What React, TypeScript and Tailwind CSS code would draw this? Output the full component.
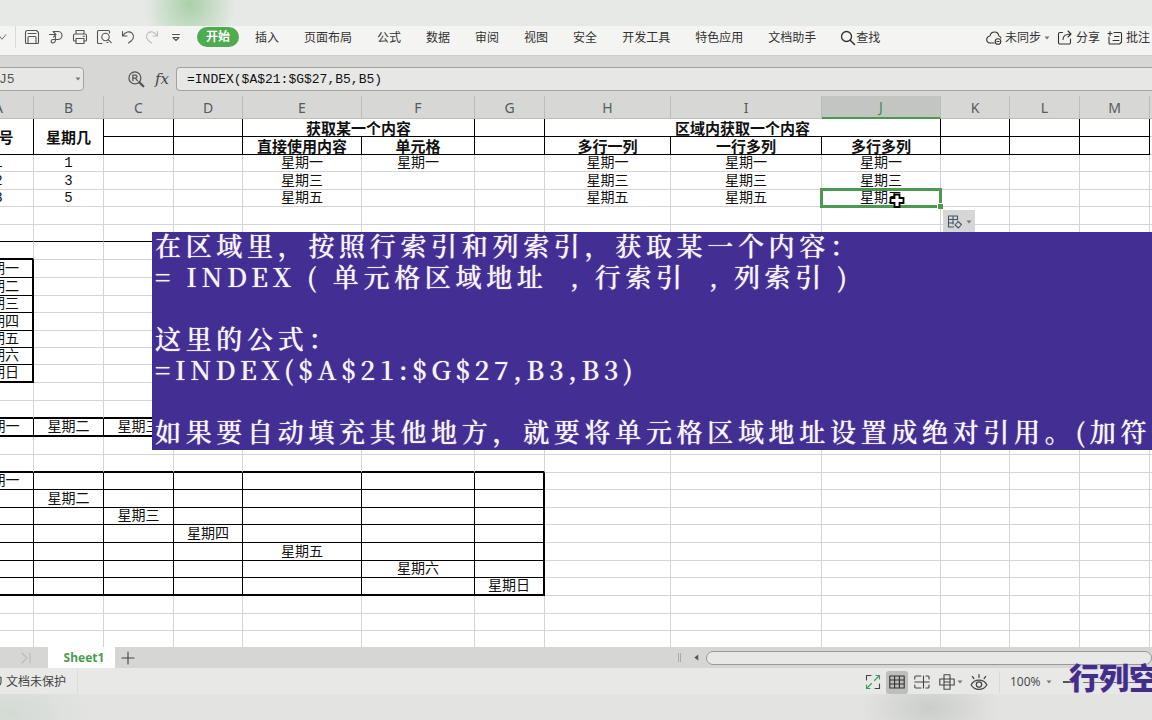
import React from "react";
import clsx from "clsx";

const UI_FONT = "font-['Open_Sans','Noto_Sans_CJK_SC',sans-serif]";

const COLUMNS = [
  { name: "A", width: "w-[70px]" },
  { name: "B", width: "w-[70px]" },
  { name: "C", width: "w-[70px]" },
  { name: "D", width: "w-[69px]" },
  { name: "E", width: "w-[119px]" },
  { name: "F", width: "w-[113px]" },
  { name: "G", width: "w-[70px]" },
  { name: "H", width: "w-[126px]" },
  { name: "I", width: "w-[151px]" },
  { name: "J", width: "w-[119px]" },
  { name: "K", width: "w-[69px]" },
  { name: "L", width: "w-[70px]" },
  { name: "M", width: "w-[70px]" },
  { name: "N", width: "w-[70px]" },
];

// Rows are a little under 18px, so some of them lose a pixel
const ROW_COUNT = 31;
const SHORT_ROWS = [3, 5, 7, 11, 13, 14, 21, 23, 26, 29];

const DAYS = ["星期一", "星期二", "星期三", "星期四", "星期五", "星期六", "星期日"];

const CELLS: Record<string, string> = {
  E2: "直接使用内容",
  F2: "单元格",
  H2: "多行一列",
  I2: "一行多列",
  J2: "多行多列",
  A3: "1",
  B3: "1",
  E3: "星期一",
  F3: "星期一",
  H3: "星期一",
  I3: "星期一",
  J3: "星期一",
  A4: "2",
  B4: "3",
  E4: "星期三",
  H4: "星期三",
  I4: "星期三",
  J4: "星期三",
  A5: "3",
  B5: "5",
  E5: "星期五",
  H5: "星期五",
  I5: "星期五",
  J5: "星期五",
  A18: "星期一",
  B18: "星期二",
  C18: "星期三",
};

DAYS.forEach((day, i) => {
  CELLS[`A${9 + i}`] = day; // one column
  CELLS[`${COLUMNS[i].name}${21 + i}`] = day; // diagonal
});

// Merged areas: first cell -> span
const MERGED: Record<string, { rowSpan?: number; colSpan?: number; text: string }> = {
  A1: { rowSpan: 2, text: "序号" },
  B1: { rowSpan: 2, text: "星期几" },
  E1: { colSpan: 2, text: "获取某一个内容" },
  H1: { colSpan: 3, text: "区域内获取一个内容" },
};
const COVERED = ["A2", "B2", "F1", "I1", "J1"];

function rightBorder(row: number, col: number) {
  if (row <= 2 && col <= 12) return "border-r border-r-black";
  if (row >= 9 && row <= 15 && col === 0) return "border-r-2 border-r-black";
  if (row === 18 && col <= 6) return "border-r border-r-black";
  if (row >= 21 && row <= 27 && col === 6) return "border-r-2 border-r-black";
  if (row >= 21 && row <= 27 && col < 6) return "border-r border-r-black";
  return "border-r border-r-[#d4d4d4]";
}

function bottomBorder(row: number, col: number) {
  if (row <= 2 && col <= 12) return "border-b border-b-black";
  if (row === 7 && col <= 6) return "border-b border-b-black";
  if ((row === 8 || row === 15) && col === 0) return "border-b-2 border-b-black";
  if (row > 8 && row < 15 && col === 0) return "border-b border-b-black";
  if ((row === 17 || row === 18) && col <= 6) return "border-b-2 border-b-black";
  if ((row === 20 || row === 27) && col <= 6) return "border-b-2 border-b-black";
  if (row > 20 && row < 27 && col <= 6) return "border-b border-b-black";
  return "border-b border-b-[#d4d4d4]";
}

function Icon({
  children,
  className = "size-4",
}: {
  children: React.ReactNode;
  className?: string;
}) {
  return (
    <svg
      viewBox="0 0 16 16"
      fill="none"
      stroke="currentColor"
      strokeWidth="1.1"
      strokeLinecap="round"
      strokeLinejoin="round"
      className={clsx("shrink-0", className)}
      aria-hidden="true"
    >
      {children}
    </svg>
  );
}

function Caret() {
  return (
    <svg viewBox="0 0 6 4" className="h-[4px] w-[6px] shrink-0" aria-hidden="true">
      <path d="M0.5 0.5h5L3 3.5z" fill="#777" />
    </svg>
  );
}

const QUICK_ACTIONS = [
  {
    label: "保存",
    icon: (
      <Icon>
        <path d="M1.5 13.5v-10a2 2 0 0 1 2-2h9l2 2v10a1 1 0 0 1-1 1h-11a1 1 0 0 1-1-1z" />
        <path d="M4 14.5V8.5a1 1 0 0 1 1-1h6a1 1 0 0 1 1 1v6M4 4.5h8" />
      </Icon>
    ),
  },
  {
    label: "输出",
    icon: (
      <Icon>
        <path d="M5 2.500h5a4 4 0 0 1 0 8H7.500M1.500 5.500h6M5.500 3l2.500 2.500L5.500 8M7.500 7.500v3.500a3 3 0 0 1-3 3 1.800 1.800 0 0 1 0-3.500h3" />
      </Icon>
    ),
  },
  {
    label: "打印",
    icon: (
      <Icon>
        <path d="M4 5V1.5h8V5M4 12H2.5a1 1 0 0 1-1-1V6.500a1.500 1.500 0 0 1 1.500-1.500h10a1.500 1.500 0 0 1 1.500 1.500V11a1 1 0 0 1-1 1H12" />
        <path d="M4 9.500h8v5H4zM11 7.200h1.500" />
      </Icon>
    ),
  },
  {
    label: "打印预览",
    icon: (
      <Icon>
        <path d="M6 14.500H2.500a1 1 0 0 1-1-1v-11a1 1 0 0 1 1-1h10a1 1 0 0 1 1 1V4" />
        <circle cx="9.500" cy="8" r="3.700" />
        <path d="M12.200 10.700l3 3M11 13.500h1" />
      </Icon>
    ),
  },
  {
    label: "撤销",
    icon: (
      <Icon>
        <path d="M2.500 2.500v4.500h4.500M2.800 6.800C5.500 2.500 9.500 2 12 4.200c2.800 2.600 2 6.500-3.500 9.800" />
      </Icon>
    ),
  },
  {
    label: "恢复",
    muted: true,
    icon: (
      <Icon>
        <path d="M13.500 2.500v4.500H9M13.200 6.800C10.500 2.500 6.500 2 4 4.200 1.200 6.800 2 10.700 7.500 14" />
      </Icon>
    ),
  },
  {
    label: "自定义",
    icon: (
      <Icon>
        <path d="M4.500 5.500h7M5 8.500h6L8 11.500z" />
      </Icon>
    ),
  },
];

const MENU = [
  "插入",
  "页面布局",
  "公式",
  "数据",
  "审阅",
  "视图",
  "安全",
  "开发工具",
  "特色应用",
  "文档助手",
];

function MenuBar() {
  return (
    <nav className="flex h-[30px] shrink-0 items-start overflow-hidden border-b border-[#cdcdcb] bg-[#f4f4f2] text-[12px] leading-[16px] whitespace-nowrap text-[#333]">
      <div className="flex h-[22px] items-center text-[#555]">
        <button aria-label="文件" className="flex w-[15px] shrink-0">
          <Icon className="-ml-1 size-3">
            <path d="M4 6l4 5 5-6" />
          </Icon>
        </button>
        <span className="h-[22px] w-px bg-[#d8d8d6]" />
        <div className="ml-2 flex gap-2">
          {QUICK_ACTIONS.map((action) => (
            <button
              key={action.label}
              aria-label={action.label}
              className={action.muted ? "text-[#bdbdbd]" : ""}
            >
              {action.icon}
            </button>
          ))}
        </div>
      </div>
      <button className="mt-px ml-[13px] h-[20px] shrink-0 rounded-full bg-[#4fab50] px-[9px] font-bold text-white">
        开始
      </button>
      <div className="ml-4 flex h-[24px] shrink-0 items-center gap-[25px]">
        {MENU.map((item) => (
          <button key={item}>{item}</button>
        ))}
        <button className="flex items-center text-[#333]">
          <Icon className="-ml-px size-4">
            <circle cx="6.500" cy="6.500" r="5" strokeWidth="1.300" />
            <path d="M10.200 10.200l4.300 4.300" strokeWidth="1.500" />
          </Icon>
          查找
        </button>
      </div>
      <div className="ml-auto flex h-[24px] shrink-0 items-center gap-[7px] pr-[2px]">
        <button className="flex items-center gap-[3px]">
          <Icon>
            <path d="M8 13H4.500A3.500 3.500 0 0 1 4 6C4.500 3.500 6.300 2 8.500 2s4 1.500 4.400 4c1 .3 1.800 1 2.100 2" />
            <circle cx="12" cy="11.500" r="2.800" />
            <path d="M11 11.500h2" />
          </Icon>
          未同步
          <Caret />
        </button>
        <button className="flex items-center gap-[3px]">
          <Icon>
            <path d="M5.500 2.500H3a1.500 1.500 0 0 0-1.500 1.500v8.500A1.500 1.500 0 0 0 3 14h9a1.500 1.500 0 0 0 1.500-1.500V9M6 9.500c0-3.500 2.500-5.500 7.500-5.500M11 1l3 3-3 3" />
          </Icon>
          分享
        </button>
        <button className="flex items-center gap-[3px]">
          <Icon>
            <path d="M7 2.500h6.500a1 1 0 0 1 1 1v8.500l-2 2H3a1 1 0 0 1-1-1V7M1 3.500h4M3 1.500v4M7.500 6.500H12M6 10.500h6" />
          </Icon>
          批注
        </button>
      </div>
    </nav>
  );
}

function FormulaBar() {
  return (
    <div className="flex h-[40px] shrink-0 items-center bg-[#d7d7d5] pt-[5px]">
      <div className="-ml-[6px] flex h-[24px] w-[90px] shrink-0 items-center rounded-[4px] border border-[#a3a3a1] bg-[#e7e7e6] pr-[2px]">
        <input
          aria-label="名称框"
          defaultValue="J5"
          className="w-0 flex-1 bg-transparent pt-[2px] pl-[4px] font-['Liberation_Mono',monospace] text-[13px] text-[#555] outline-none"
        />
        <Caret />
      </div>
      <button aria-label="查找公式" className="ml-[43px] text-[#555]">
        <Icon className="size-[18px]">
          <circle cx="7" cy="7" r="5.300" />
          <path d="M5.200 9.500v-5H7.500a1.300 1.300 0 0 1 0 2.700H5.200M7.500 7.200l1.700 2.300" />
          <path d="M11 11l3.500 3.500" strokeWidth="2" />
        </Icon>
      </button>
      <button
        aria-label="插入函数"
        className="ml-[8px] w-[18px] font-['DejaVu_Serif',serif] text-[15px] leading-[20px] text-[#444] italic"
      >
        fx
      </button>
      <input
        aria-label="编辑栏"
        defaultValue="=INDEX($A$21:$G$27,B5,B5)"
        className="ml-[5px] h-[24px] min-w-0 flex-1 rounded-l-[4px] border border-r-0 border-[#a3a3a1] bg-[#e7e7e6] pt-[2px] pl-[10px] font-['Liberation_Mono',monospace] text-[13px] text-[#111] outline-none"
      />
    </div>
  );
}

function Selection() {
  return (
    <>
      <span className="absolute -top-[2px] -right-[2px] -bottom-[2px] -left-[2px] border-[3px] border-[#4c9a52]" />
      <span className="absolute -right-[3px] -bottom-[3px] size-[6px] border-t border-l border-white bg-[#4c9a52]" />
      {/* cell pointer */}
      <svg
        viewBox="0 0 16 16"
        className="absolute top-[3px] left-[67px] size-[16px]"
        aria-hidden="true"
      >
        <path
          d="M5.500 1.500h5v3.500h4v5h-4v4h-5v-4h-4V5h4z"
          fill="#fff"
          stroke="#000"
          strokeWidth="1.800"
        />
      </svg>
      <button
        aria-label="填充选项"
        className="absolute top-[20px] left-[121px] flex h-[24px] w-[32px] items-center gap-[3px] bg-[#d6d6d6] pl-[4px] text-[#456]"
      >
        <Icon>
          <path d="M1.500 2h9v4M1.500 2v11h5M1.500 5.500h9M1.500 9h5M6 2v8" />
          <path d="M11 7.500l3.500 3-3 3.500-3.500-3z" />
        </Icon>
        <Caret />
      </button>
    </>
  );
}

function Sheet() {
  return (
    <table className="-ml-[36px] w-[1256px] table-fixed border-separate border-spacing-0 text-center">
      <colgroup>
        {COLUMNS.map((c) => (
          <col key={c.name} className={c.width} />
        ))}
      </colgroup>
      <thead>
        <tr>
          {COLUMNS.map((c) => (
            <th
              key={c.name}
              scope="col"
              className={clsx(
                "h-[23px] border-r border-r-[#bcbcba] p-0 pt-px font-['Noto_Sans',sans-serif] text-[14px] leading-[20px] font-normal",
                c.name === "J"
                  ? "border-b-2 border-b-[#4c9a52] bg-[#c3c5c3] text-[#4c8a52]"
                  : "border-b border-b-[#bcbcba] bg-[#d7d7d5] text-[#555b60]"
              )}
            >
              {c.name}
            </th>
          ))}
        </tr>
      </thead>
      <tbody>
        {Array.from({ length: ROW_COUNT }, (_, r) => r + 1).map((row) => (
          <tr key={row} className={SHORT_ROWS.includes(row) ? "h-[17px]" : "h-[18px]"}>
            {COLUMNS.map((c, col) => {
              const id = `${c.name}${row}`;
              if (COVERED.includes(id)) return null;
              const merged = MERGED[id];
              return (
                <td
                  key={id}
                  rowSpan={merged?.rowSpan}
                  colSpan={merged?.colSpan}
                  className={clsx(
                    "p-0 leading-[15px] whitespace-nowrap text-[#111]",
                    row <= 2
                      ? "font-['Noto_Sans_CJK_SC',sans-serif] text-[15px] font-bold"
                      : "pt-px font-['Liberation_Mono','Noto_Sans_CJK_SC',monospace] text-[14px]",
                    rightBorder(row, col),
                    bottomBorder(row, col),
                    id === "J5" && "relative"
                  )}
                >
                  {merged ? merged.text : CELLS[id]}
                  {id === "J5" && <Selection />}
                </td>
              );
            })}
          </tr>
        ))}
      </tbody>
    </table>
  );
}

function Note() {
  return (
    <div className="absolute top-[136px] right-0 left-[152px] overflow-hidden bg-[#432e93] pb-1 pl-[3px] text-[#f7f4ff]">
      <div className="-mt-[3px] font-['Noto_Serif_CJK_SC','Noto_Sans_CJK_SC',serif] text-[26px] leading-[31px] font-medium tracking-[0.18em] whitespace-pre [text-shadow:0_0_1px_#f7f4ff]">
        <p>在区域里，按照行索引和列索引，获取某一个内容：</p>
        <p>{"= INDEX ( 单元格区域地址  , 行索引  , 列索引 )"}</p>
        <p>&nbsp;</p>
        <p>这里的公式：</p>
        <p>=INDEX($A$21:$G$27,B3,B3)</p>
        <p>&nbsp;</p>
        <p>如果要自动填充其他地方，就要将单元格区域地址设置成绝对引用。(加符号)</p>
      </div>
    </div>
  );
}

function SheetTabs() {
  return (
    <div className="flex h-[21px] shrink-0 items-center bg-[#d6d6d4]">
      <button aria-label="最后一个工作表" className="w-[48px] shrink-0 text-[#bbb]">
        <Icon className="ml-[18px] size-4">
          <path d="M4 3l5 5-5 5M12 3v10" />
        </Icon>
      </button>
      <button className="h-full w-[67px] shrink-0 bg-white pl-[5px] font-['Noto_Sans',sans-serif] text-[12px] leading-[20px] font-bold text-[#4c9a52]">
        Sheet1
      </button>
      <button aria-label="新建工作表" className="ml-[5px] text-[#444]">
        <Icon>
          <path d="M8 2v12M2 8h12" />
        </Icon>
      </button>
      <div className="ml-auto flex w-[474px] items-center">
        <span className="h-[9px] w-[3px] shrink-0 border-x border-[#aaa]" />
        <button aria-label="向左滚动" className="ml-[8px]">
          <svg viewBox="0 0 8 8" className="mx-[4px] size-[7px]" aria-hidden="true">
            <path d="M6 0.500v7L1.500 4z" fill="#555" />
          </svg>
        </button>
        <div className="ml-[2px] h-[14px] flex-1 rounded-full border border-[#999] bg-[#e8e8e7]" />
      </div>
    </div>
  );
}

function StatusBar() {
  return (
    <div className="relative flex h-[26px] shrink-0 items-center bg-[#e8e8e7] pt-[2px] text-[12px] leading-[16px] text-[#444]">
      <div className="flex h-full items-center border-r border-[#dcdcda] pr-[11px]">
        <Icon className="-ml-[13px] size-4">
          <path d="M8 1.500l6 2v4.500c0 3-2.500 5-6 6.500-3.500-1.500-6-3.500-6-6.500V3.500z" />
        </Icon>
        <span className="ml-[3px]">文档未保护</span>
      </div>
      <div className="ml-auto flex w-[287px] shrink-0 items-center">
        <button aria-label="全屏显示" className="mr-[5px]">
          <Icon>
            <path d="M1.500 6V1.500H6M10 14.500h4.500V10" />
            <path
              d="M9.500 6.500l5-5M11 1.500h3.500V5M6.500 9.500l-5 5M1.500 11v3.500H5"
              stroke="#3f9a5d"
            />
          </Icon>
        </button>
        <button
          aria-label="普通视图"
          className="flex h-[23px] w-[22px] items-center justify-center rounded-[3px] bg-[#bebebc] text-[#333]"
        >
          <Icon>
            <path d="M.8 2h14.400v12H.8zM.8 6h14.400M.8 10h14.400M5.600 2v12M10.400 2v12" />
          </Icon>
        </button>
        <button aria-label="分页预览" className="ml-[6px]">
          <Icon>
            <path d="M.8 5V3a1 1 0 0 1 1-1H7M.8 8h14.400M9.500 2v12M.8 11v2a1 1 0 0 0 1 1H7M12 2h2a1 1 0 0 1 1 1v2M12 14h2a1 1 0 0 0 1-1v-2" />
          </Icon>
        </button>
        <button aria-label="阅读模式" className="ml-[9px] flex items-center gap-[2px]">
          <Icon>
            <path d="M5 .8h6v14.400H5zM.8 5h14.400v6H.8zM5 8h6" />
          </Icon>
          <Caret />
        </button>
        <button aria-label="护眼模式" className="ml-[7px]">
          <Icon className="size-[18px]">
            <path d="M1 10.500c3-5.500 11-5.500 14 0-3 5.500-11 5.500-14 0zM8 4V1.500M3.500 5L2 3M12.500 5L14 3" />
            <circle cx="8" cy="10.300" r="2.400" />
          </Icon>
        </button>
        <span className="ml-[11px] h-[22px] w-px bg-[#d9d9d7]" />
        <button className="ml-[10px] flex items-center gap-[5px]">
          100%
          <Caret />
        </button>
        <span className="ml-[11px] h-[2px] w-[10px] bg-[#555]" />
        <span className="ml-[10px] h-px flex-1 bg-[#777]" />
      </div>
      {/* channel watermark */}
      <div className="absolute -top-[10px] right-0 w-[83px] overflow-hidden font-['Noto_Sans_CJK_SC',sans-serif] text-[30px] leading-[36px] font-black whitespace-nowrap text-[#432e86] [text-shadow:0_0_2px_#cfc4ff]">
        行列空间
      </div>
    </div>
  );
}

export default function App() {
  return (
    <div className={clsx("flex h-screen flex-col overflow-hidden bg-white", UI_FONT)}>
      <div className="h-[26px] shrink-0 bg-[#e7e9e7] bg-[radial-gradient(ellipse_46px_50px_at_190px_4px,#a9d0a9,transparent)]" />
      <MenuBar />
      <FormulaBar />
      <main className="relative min-h-0 flex-1 overflow-hidden">
        <Sheet />
        <Note />
      </main>
      <SheetTabs />
      <StatusBar />
      <div className="h-[26px] shrink-0 bg-[#e3e4e2] bg-[radial-gradient(ellipse_70px_40px_at_930px_14px,#cbcdcb,transparent),radial-gradient(ellipse_80px_50px_at_10px_20px,#d3dad4,transparent)]" />
    </div>
  );
}
